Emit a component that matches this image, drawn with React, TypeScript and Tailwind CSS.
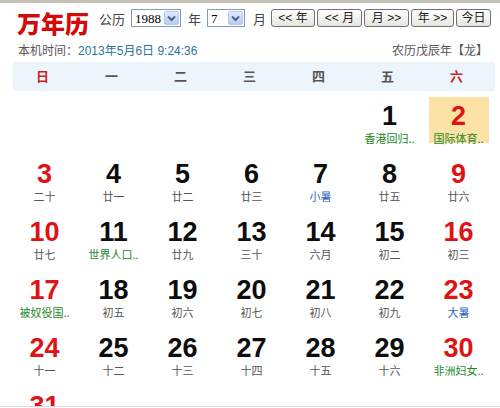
import React from "react";

type Day = { d: number; sub: string; red?: boolean; kind?: "fest" | "term"; hl?: boolean } | null;

const rows: Day[][] = [
  [null, null, null, null, null, { d: 1, sub: "香港回归..", kind: "fest" }, { d: 2, sub: "国际体育..", kind: "fest", red: true, hl: true }],
  [
    { d: 3, sub: "二十", red: true },
    { d: 4, sub: "廿一" },
    { d: 5, sub: "廿二" },
    { d: 6, sub: "廿三" },
    { d: 7, sub: "小暑", kind: "term" },
    { d: 8, sub: "廿五" },
    { d: 9, sub: "廿六", red: true },
  ],
  [
    { d: 10, sub: "廿七", red: true },
    { d: 11, sub: "世界人口..", kind: "fest" },
    { d: 12, sub: "廿九" },
    { d: 13, sub: "三十" },
    { d: 14, sub: "六月" },
    { d: 15, sub: "初二" },
    { d: 16, sub: "初三", red: true },
  ],
  [
    { d: 17, sub: "被奴役国..", kind: "fest", red: true },
    { d: 18, sub: "初五" },
    { d: 19, sub: "初六" },
    { d: 20, sub: "初七" },
    { d: 21, sub: "初八" },
    { d: 22, sub: "初九" },
    { d: 23, sub: "大暑", kind: "term", red: true },
  ],
  [
    { d: 24, sub: "十一", red: true },
    { d: 25, sub: "十二" },
    { d: 26, sub: "十三" },
    { d: 27, sub: "十四" },
    { d: 28, sub: "十五" },
    { d: 29, sub: "十六" },
    { d: 30, sub: "非洲妇女..", kind: "fest", red: true },
  ],
  [{ d: 31, sub: "", red: true }, null, null, null, null, null, null],
];

const week = ["日", "一", "二", "三", "四", "五", "六"];

function Select({ value, w }: { value: string; w: string }) {
  return (
    <div className={`flex h-[18px] ${w} items-stretch border border-[#7f9db9] bg-white`}>
      <div className="flex flex-1 items-center pl-[3px] text-[13px] leading-none text-black [font-family:'Liberation_Serif',serif]">
        {value}
      </div>
      <div className="m-[1px] flex w-[15px] items-center justify-center rounded-[2px] border border-[#b8c9ef] bg-gradient-to-b from-[#e2ebfd] to-[#b6cbf6]">
        <svg width="9" height="7" viewBox="0 0 9 7">
          <path d="M1 1.5 L4.5 5 L8 1.5" fill="none" stroke="#4d6185" strokeWidth="2" />
        </svg>
      </div>
    </div>
  );
}

function Btn({ label, w }: { label: string; w: string }) {
  return (
    <div
      className={`flex h-[18px] ${w} items-center justify-center rounded-[3px] border border-[#707070] bg-gradient-to-b from-white to-[#e6e5df] text-[12px] leading-none text-[#222]`}
    >
      {label}
    </div>
  );
}

export default function App() {
  return (
    <div className="flex h-[408px] w-[500px] flex-col overflow-hidden border-t-[3px] border-[#c4c0b4] bg-white [font-family:'Liberation_Sans','Noto_Sans_CJK_SC',sans-serif]">
      {/* top row */}
      <div className="flex h-[33px] items-start">
        <div className="ml-[17px] mt-[8px] text-[24px] font-black leading-[24px] text-[#d20a0a] [font-family:'Noto_Sans_CJK_SC',sans-serif]">
          万年历
        </div>
        <div className="ml-[10px] mt-[9px] text-[13px] leading-[16px] text-[#444]">公历</div>
        <div className="ml-[6px] mt-[6px]">
          <Select value="1988" w="w-[50px]" />
        </div>
        <div className="ml-[7px] mt-[9px] text-[13px] leading-[16px] text-[#444]">年</div>
        <div className="ml-[6px] mt-[6px]">
          <Select value="7" w="w-[38px]" />
        </div>
        <div className="ml-[8px] mt-[9px] text-[13px] leading-[16px] text-[#444]">月</div>
        <div className="ml-[5px] mt-[6px] flex gap-[2px]">
          <Btn label="<< 年" w="w-[44px]" />
          <Btn label="<< 月" w="w-[45px]" />
          <Btn label="月 >>" w="w-[45px]" />
          <Btn label="年 >>" w="w-[43px]" />
          <Btn label="今日" w="w-[35px]" />
        </div>
      </div>

      {/* second row */}
      <div className="flex h-[26px] items-center justify-between pl-[18px] pr-[12px] pt-[4px] text-[12px] leading-none">
        <div>
          <span className="text-[#555]">本机时间：</span>
          <span className="text-[#2b7496]">2013年5月6日 9:24:36</span>
        </div>
        <div className="text-[#555]">农历戊辰年【龙】</div>
      </div>

      {/* week header */}
      <div className="ml-[13px] w-[482px] h-[29px] bg-[#edf5fc]">
        <div className="-ml-[5px] grid h-full grid-cols-[repeat(7,69px)] items-center">
          {week.map((w, i) => (
            <div
              key={w}
              className={`text-center text-[13px] font-bold ${i === 0 || i === 6 ? "text-[#cc1f1f]" : "text-[#555]"}`}
            >
              {w}
            </div>
          ))}
        </div>
      </div>

      {/* days */}
      <div className="mt-[4px] min-h-0 flex-1 overflow-hidden border-b border-[#dcdcdc]">
        <div className="ml-[10px] grid grid-cols-[repeat(7,69px)] auto-rows-[58px]">
          {rows.flat().map((c, i) => (
            <div key={i} className="flex justify-center pt-[2px]">
              {c && (
                <div
                  className={`flex h-[46px] w-[60px] flex-col items-center pt-[6px] ${c.hl ? "bg-[#fde2a6]" : ""}`}
                >
                  <div
                    className={`text-[27px] font-bold leading-[27px] ${c.red ? "text-[#e01212]" : "text-[#0d0d0d]"}`}
                  >
                    {c.d}
                  </div>
                  {c.sub && (
                    <div
                      className={`mt-[1px] whitespace-nowrap text-[11px] leading-[14px] [font-family:'Noto_Sans_CJK_SC',sans-serif] ${
                        c.kind === "fest" ? "text-[#23882a]" : c.kind === "term" ? "text-[#2a64b4]" : "text-[#555]"
                      }`}
                    >
                      {c.sub}
                    </div>
                  )}
                </div>
              )}
            </div>
          ))}
        </div>
      </div>
      <div className="h-[1px] bg-white" />
    </div>
  );
}
